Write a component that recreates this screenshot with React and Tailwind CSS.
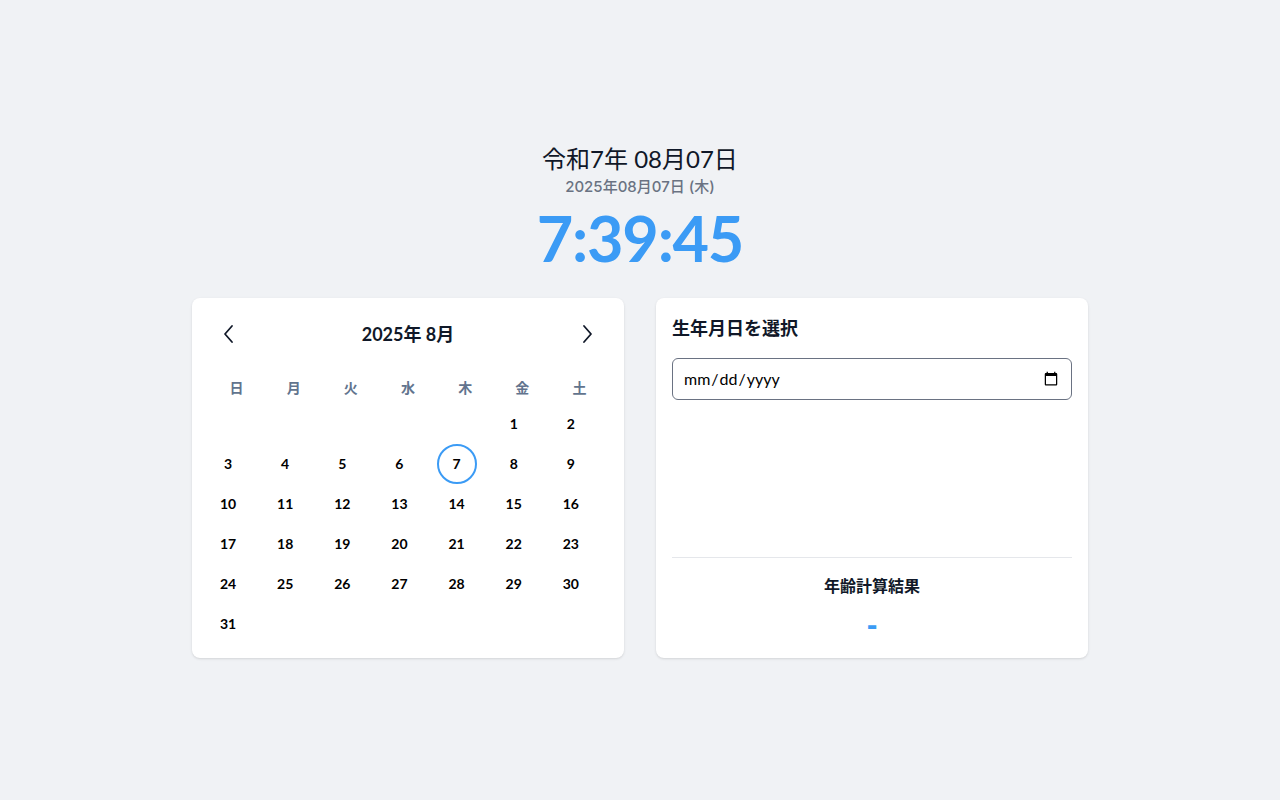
import React from "react";

const FONT = { fontFamily: 'Lato, "Noto Sans CJK JP", sans-serif' };
const INTER = { fontFamily: 'Inter, "Noto Sans CJK JP", sans-serif' };

function Chevron({ dir }) {
  return (
    <svg width="24" height="24" viewBox="0 0 24 24" fill="none" stroke="currentColor" strokeWidth="1.8" strokeLinecap="round" strokeLinejoin="round">
      {dir === "left" ? <path d="M16 4 L9 12 L16 20" /> : <path d="M8 4 L15 12 L8 20" />}
    </svg>
  );
}

export default function App() {
  const weekdays = ["日", "月", "火", "水", "木", "金", "土"];
  const cells = [];
  for (let i = 0; i < 5; i++) cells.push(null);
  for (let d = 1; d <= 31; d++) cells.push(d);

  return (
    <div className="min-h-screen w-full bg-[#f0f2f5] flex flex-col items-center justify-center" style={FONT}>
      <div className="flex flex-col items-center">
        <div className="text-2xl leading-8 text-gray-900">令和7年 08月07日</div>
        <div className="text-[15px] leading-5 text-gray-500 mt-0.5 font-medium" style={INTER}>2025年08月07日 (木)</div>
        <div className="text-[63px] leading-[60px] font-bold text-[#3b9bf5] mt-[11px] tracking-[-0.02em]">7:39:45</div>
      </div>

      <div className="w-[896px] grid grid-cols-2 gap-8 mt-[30px]">
        <div className="bg-white rounded-lg shadow-sm p-4 pb-[14px]">
          <div className="flex items-center justify-between h-10 mb-5">
            <button className="p-2 text-gray-900"><Chevron dir="left" /></button>
            <div className="text-lg font-bold text-gray-900">2025年 8月</div>
            <button className="p-2 text-gray-900"><Chevron dir="right" /></button>
          </div>
          <div className="grid grid-cols-7 h-7 mb-0.5">
            {weekdays.map((w) => (
              <div key={w} className="flex items-center justify-center text-sm font-bold text-slate-500">{w}</div>
            ))}
          </div>
          <div className="grid grid-cols-7">
            {cells.map((d, i) => (
              <div key={i} className="h-10">
                {d && (
                  <div
                    className={
                      "w-10 h-10 rounded-full flex items-center justify-center text-sm font-bold text-black " +
                      (d === 7 ? "border-2 border-[#3b9bf5]" : "")
                    }
                  >
                    {d}
                  </div>
                )}
              </div>
            ))}
          </div>
        </div>

        <div className="bg-white rounded-lg shadow-sm p-4 flex flex-col">
          <div className="text-lg leading-7 font-bold text-gray-900 mb-4">生年月日を選択</div>
          <input
            type="date"
            className="w-full border border-gray-500 rounded-md px-2.5 py-2 text-base leading-6 text-black"
            style={FONT}
          />
          <div className="flex-1" />
          <div className="border-t border-gray-200 pt-4 flex flex-col items-center">
            <div className="text-base leading-6 font-bold text-gray-900">年齢計算結果</div>
            <div className="text-3xl leading-9 font-extrabold text-[#3b9bf5] mt-2">-</div>
          </div>
        </div>
      </div>
    </div>
  );
}
